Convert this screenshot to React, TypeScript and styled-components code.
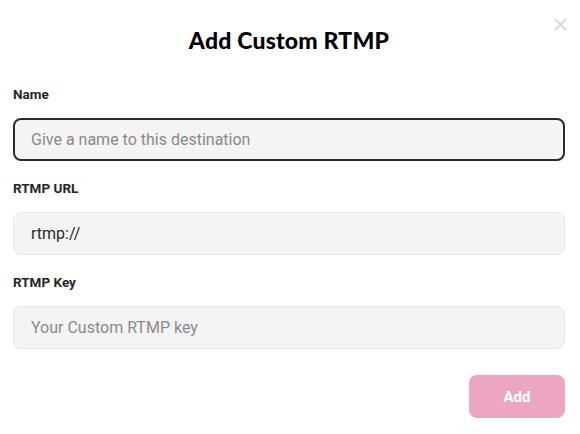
import React from 'react'
import styled, { createGlobalStyle } from 'styled-components'

const GlobalStyle = createGlobalStyle`
  body {
    margin: 0;
    background: #ffffff;
    font-family: Roboto, 'Liberation Sans', sans-serif;
  }
`

export default function App() {
  return (
    <>
      <GlobalStyle />
      <StyledModal>
        <StyledClose aria-label="Close">
          <svg width="13" height="13" viewBox="0 0 13 13">
            <path d="M1 1L12 12M12 1L1 12" stroke="#d2d2d2" strokeWidth="1.6" />
          </svg>
        </StyledClose>
        <StyledTitle>Add Custom RTMP</StyledTitle>
        <StyledField>
          <StyledLabel>Name</StyledLabel>
          <StyledInput $focused placeholder="Give a name to this destination" />
        </StyledField>
        <StyledField>
          <StyledLabel>RTMP URL</StyledLabel>
          <StyledInput defaultValue="rtmp://" />
        </StyledField>
        <StyledField>
          <StyledLabel>RTMP Key</StyledLabel>
          <StyledInput placeholder="Your Custom RTMP key" />
        </StyledField>
        <StyledFooter>
          <StyledAddButton disabled>Add</StyledAddButton>
        </StyledFooter>
      </StyledModal>
    </>
  )
}

const StyledModal = styled.div`
  position: relative;
  width: 580px;
  height: 434px;
  box-sizing: border-box;
  padding: 26px 15px 0 13px;
  display: flex;
  flex-direction: column;
`
const StyledClose = styled.button`
  position: absolute;
  top: 17px;
  right: 12px;
  width: 15px;
  height: 15px;
  padding: 0;
  border: none;
  background: none;
  display: flex;
  align-items: center;
  justify-content: center;
`
const StyledTitle = styled.h2`
  margin: 0 0 32px;
  text-align: center;
  font-family: Lato, 'Noto Sans', sans-serif;
  font-size: 23px;
  line-height: 28px;
  font-weight: 900;
  letter-spacing: 0.2px;
  color: #000;
`
const StyledField = styled.div`
  display: flex;
  flex-direction: column;
  gap: 16px;
  margin-bottom: 19px;
`
const StyledLabel = styled.label`
  font-size: 13.5px;
  line-height: 16px;
  font-weight: 700;
  color: #262626;
`
const StyledInput = styled.input<{ $focused?: boolean }>`
  box-sizing: border-box;
  height: 43px;
  width: 100%;
  padding: 0 ${(p) => (p.$focused ? 16 : 17)}px;
  border-radius: 8px;
  background: #f4f4f4;
  border: ${(p) => (p.$focused ? '2px solid #2a2a2a' : '1px solid #e7e7e7')};
  font-family: Roboto, 'Liberation Sans', sans-serif;
  font-size: 16px;
  color: #2b2b2b;
  outline: none;
  &::placeholder {
    color: #8a8a8a;
  }
`
const StyledFooter = styled.div`
  display: flex;
  justify-content: flex-end;
  margin-top: 7px;
`
const StyledAddButton = styled.button`
  width: 96px;
  height: 43px;
  border: none;
  border-radius: 8px;
  background: #eda6c2;
  color: #fff;
  font-family: Roboto, 'Liberation Sans', sans-serif;
  font-size: 15px;
  font-weight: 700;
`
